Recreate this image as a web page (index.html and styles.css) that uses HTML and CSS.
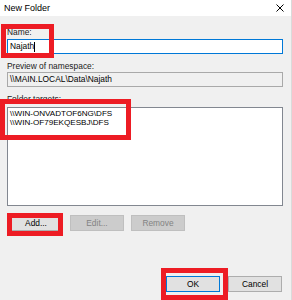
FILE: index.html
```html
<!DOCTYPE html>
<html lang="en">
<head>
    <meta charset="UTF-8">
    <title>New Folder</title>
    <link rel="stylesheet" href="styles.css">
</head>
<body>
    <div class="dialog">
        <div class="titlebar">
            <span class="title">New Folder</span>
            <svg class="close" width="8" height="8" viewBox="0 0 8 8">
                <path d="M0.5 0.5 L7.5 7.5 M7.5 0.5 L0.5 7.5" stroke="#000" stroke-width="1" fill="none"/>
            </svg>
        </div>

        <div class="content">
            <div class="field-label first">Name:</div>
            <div class="textbox focused">Najath<span class="caret"></span></div>

            <div class="field-label">Preview of namespace:</div>
            <div class="textbox readonly">\\MAIN.LOCAL\Data\Najath</div>

            <div class="field-label">Folder targets:</div>
            <div class="listbox">
                <div>\\WIN-ONVADTOF6NG\DFS</div>
                <div>\\WIN-OF79EKQESBJ\DFS</div>
            </div>

            <div class="list-buttons">
                <button class="btn">Add...</button>
                <button class="btn" disabled>Edit...</button>
                <button class="btn" disabled>Remove</button>
            </div>

            <div class="footer">
                <button class="btn default">OK</button>
                <button class="btn">Cancel</button>
            </div>
        </div>

        <!-- red annotation boxes -->
        <div class="mark mark-name"></div>
        <div class="mark mark-targets"></div>
        <div class="mark mark-add"></div>
        <div class="mark mark-ok"></div>
    </div>
</body>
</html>
```

FILE: styles.css
```css
body {
    margin: 0;
    font-family: "Liberation Sans", Arial, sans-serif;
    background: #f0f0f0;
}

.dialog {
    position: relative;
    width: 291px;
    height: 300px;
    border-right: 1px solid #dadada;
    background: #f0f0f0;
    overflow: hidden;
}

.titlebar {
    height: 16px;
    background: #fff;
    display: flex;
    align-items: center;
    justify-content: space-between;
    padding: 0 7px 0 4px;
}

.title {
    font-size: 9px;
    color: #000;
}

.close {
    display: block;
}

.content {
    padding: 0 8px 0 7px;
    font-size: 8.4px;
    color: #000;
}

.field-label {
    line-height: 10px;
    height: 10px;
    margin-top: 7px;
    color: #1a1a1a;
}

.field-label.first {
    margin-top: 11px;
}

.textbox {
    height: 13px;
    line-height: 13px;
    border: 1px solid #adadad;
    background: #fff;
    padding: 0 2px;
    margin-top: 1px;
    white-space: nowrap;
}

.textbox.focused {
    border-color: #0078d7;
    margin-top: 2px;
}

.textbox.readonly {
    background: #f0f0f0;
    border-color: #a9a9a9;
}

.caret {
    display: inline-block;
    width: 1px;
    height: 10px;
    background: #000;
    vertical-align: middle;
}

.listbox {
    height: 99px;
    margin-top: 3px;
    border: 1px solid #828790;
    background: #fff;
    padding: 1px 2px;
    font-size: 8.1px;
    line-height: 9px;
    box-sizing: border-box;
}

.list-buttons {
    display: flex;
    gap: 7px;
    margin-top: 9px;
    padding-left: 2px;
}

.btn {
    width: 54px;
    height: 16px;
    padding: 0;
    font-family: inherit;
    font-size: 8.4px;
    color: #000;
    background: #e1e1e1;
    border: 1px solid #adadad;
    border-radius: 0;
}

.btn:disabled {
    background: #cccccc;
    border-color: #bfbfbf;
    color: #838383;
}

.btn.default {
    border-color: #0078d7;
}

.footer {
    display: flex;
    justify-content: flex-end;
    gap: 8px;
    margin-top: 45px;
    padding-right: 1px;
}

.mark {
    position: absolute;
    border: 5px solid #ed1c24;
    box-sizing: border-box;
}

.mark-name {
    left: 1px;
    top: 24px;
    width: 53px;
    height: 34px;
}

.mark-targets {
    left: 0;
    top: 99px;
    width: 131px;
    height: 41px;
}

.mark-add {
    left: 7px;
    top: 213px;
    width: 56px;
    height: 23px;
}

.mark-ok {
    left: 161px;
    top: 268px;
    width: 67px;
    height: 32px;
}
```
